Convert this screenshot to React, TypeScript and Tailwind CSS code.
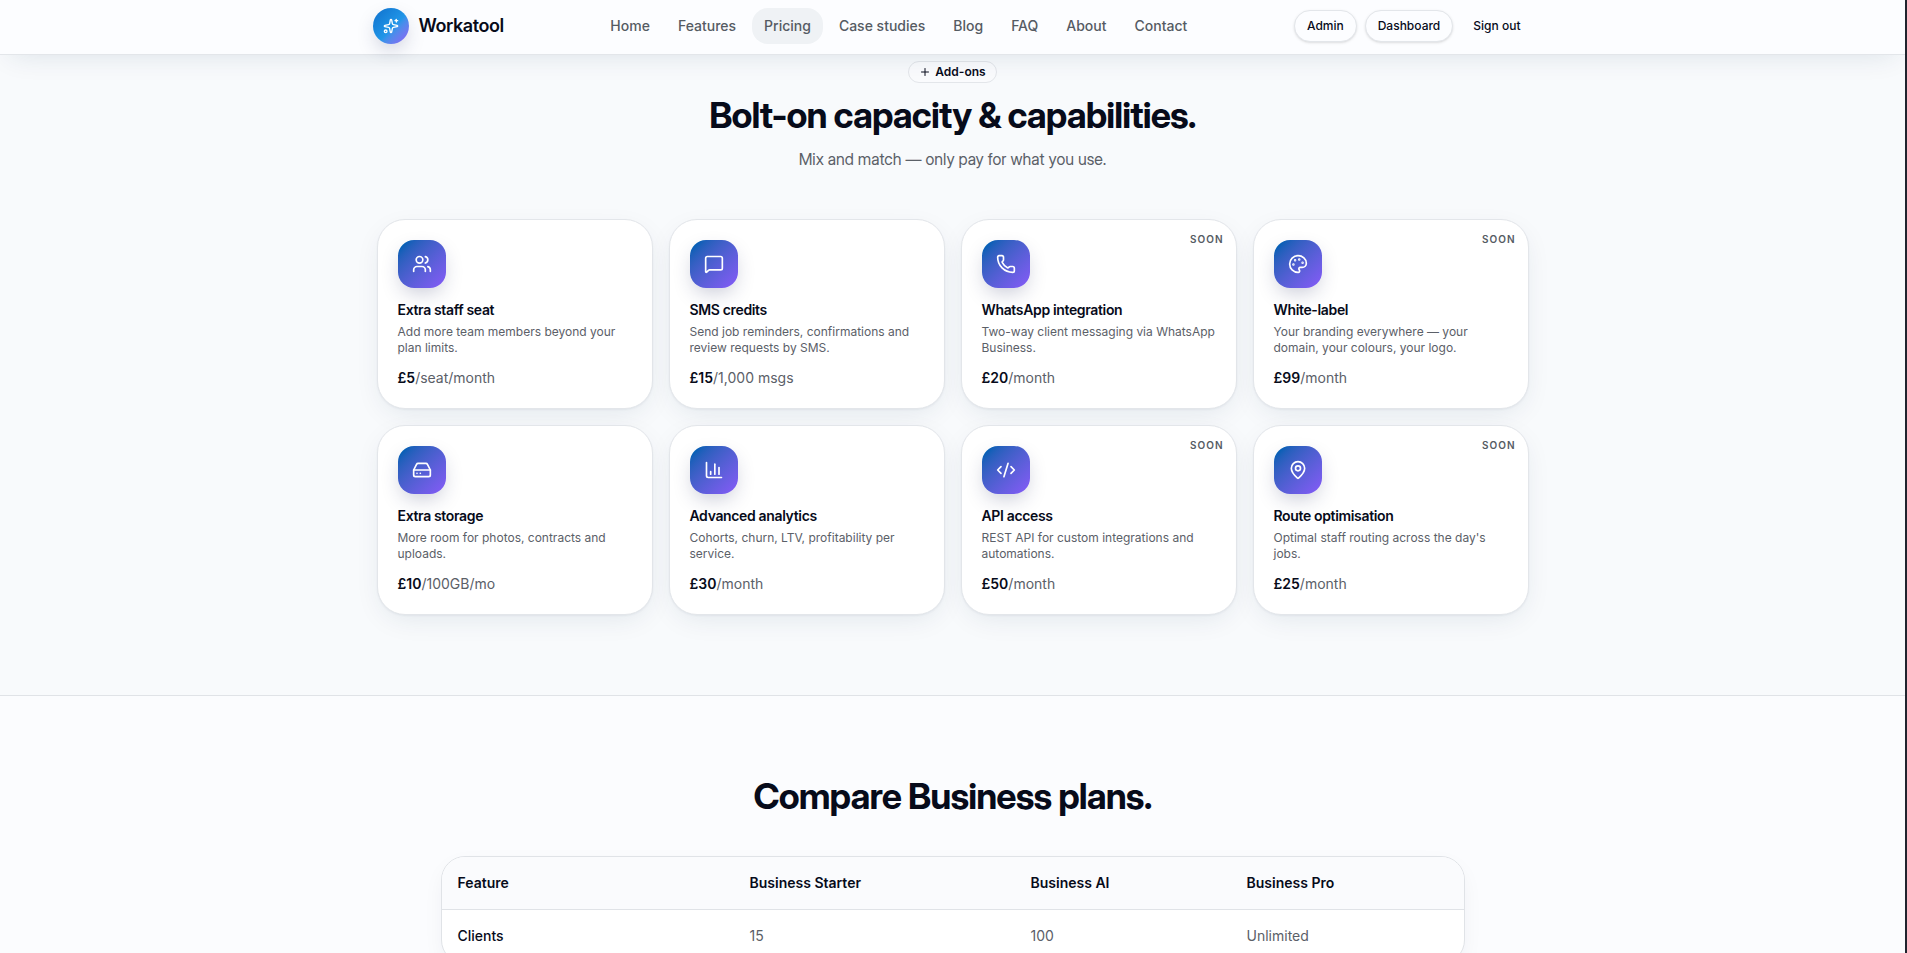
import {
  ChartColumn,
  CodeXml,
  HardDrive,
  MapPin,
  MessageSquare,
  Palette,
  Phone,
  Plus,
  Sparkles,
  Users,
  type LucideIcon,
} from "lucide-react";

type AddOn = {
  icon: LucideIcon;
  title: string;
  text: string;
  price: string;
  unit: string;
  soon?: boolean;
};

const links = ["Home", "Features", "Pricing", "Case studies", "Blog", "FAQ", "About", "Contact"];

const addOns: AddOn[] = [
  { icon: Users, title: "Extra staff seat", text: "Add more team members beyond your plan limits.", price: "£5", unit: "/seat/month" },
  { icon: MessageSquare, title: "SMS credits", text: "Send job reminders, confirmations and review requests by SMS.", price: "£15", unit: "/1,000 msgs" },
  { icon: Phone, title: "WhatsApp integration", text: "Two-way client messaging via WhatsApp Business.", price: "£20", unit: "/month", soon: true },
  { icon: Palette, title: "White-label", text: "Your branding everywhere — your domain, your colours, your logo.", price: "£99", unit: "/month", soon: true },
  { icon: HardDrive, title: "Extra storage", text: "More room for photos, contracts and uploads.", price: "£10", unit: "/100GB/mo" },
  { icon: ChartColumn, title: "Advanced analytics", text: "Cohorts, churn, LTV, profitability per service.", price: "£30", unit: "/month" },
  { icon: CodeXml, title: "API access", text: "REST API for custom integrations and automations.", price: "£50", unit: "/month", soon: true },
  { icon: MapPin, title: "Route optimisation", text: "Optimal staff routing across the day's jobs.", price: "£25", unit: "/month", soon: true },
];

function Header() {
  return (
    <header className="relative z-10 border-b border-[#e3e6ea] bg-[#fcfdff] shadow-[0_10px_28px_-10px_rgba(15,50,80,0.12)]">
      <div className="mx-auto flex max-w-[1200px] items-center justify-between px-5 pt-2 pb-2.5">
        <a href="#" className="flex items-center gap-2.5">
          <span className="flex size-9 items-center justify-center rounded-full bg-linear-135 from-[#1070cc] via-[#2196e8] via-55% to-[#8a5cf6] text-white shadow-[0_8px_20px_-4px_rgba(30,41,90,0.25)]">
            <Sparkles className="size-4" />
          </span>
          <span className="text-lg font-semibold tracking-tight">Workatool</span>
        </a>
        <nav className="flex items-center gap-1">
          {links.map((label) => (
            <a
              key={label}
              href="#"
              className={
                label === "Pricing"
                  ? "rounded-2xl bg-[#eff2f5] px-3 py-2 text-sm font-medium text-[#555b63]"
                  : "rounded-2xl px-3 py-2 text-sm font-medium text-[#555b63]"
              }
            >
              {label}
            </a>
          ))}
        </nav>
        <div className="flex items-center gap-2 text-xs font-medium">
          <button className="h-8 rounded-full border border-[#e3e6ea] bg-[#fcfdff] px-3 shadow-sm">Admin</button>
          <button className="h-8 rounded-full border border-[#e3e6ea] bg-[#fcfdff] px-3 shadow-sm">Dashboard</button>
          <button className="h-8 rounded-full px-3">Sign out</button>
        </div>
      </div>
    </header>
  );
}

function Card({ icon: Icon, title, text, price, unit, soon }: AddOn) {
  return (
    <article className="relative rounded-[28px] border border-[#e3e6ea] bg-white p-5 shadow-[0_1px_2px_rgba(15,40,70,0.05),0_8px_28px_-6px_rgba(15,50,80,0.10)]">
      {soon && (
        <span className="absolute top-3 right-3 text-[10px] leading-[14px] font-semibold tracking-widest text-[#555b63] uppercase">
          Soon
        </span>
      )}
      <div className="flex size-12 items-center justify-center rounded-2xl bg-linear-135 from-[#005fb5] from-10% to-[#855af8] text-white shadow-[0_8px_20px_-4px_rgba(30,41,90,0.25)]">
        <Icon className="size-5" strokeWidth={2} />
      </div>
      <h3 className="mt-3 text-sm font-semibold tracking-tight">{title}</h3>
      <p className="mt-1 text-xs text-[#5b6068]">{text}</p>
      <p className="mt-3 text-sm text-[#5b6068]">
        <span className="font-semibold text-[#070b1a]">{price}</span>
        {unit}
      </p>
    </article>
  );
}

export default function App() {
  return (
    <div className="h-screen overflow-hidden border-r-2 border-[#20242e] bg-[#fbfcfe] font-['Inter',sans-serif] text-[#070b1a]">
      <Header />
      <main>
        <section className="border-b border-[#e0e3e7] bg-[#f8fafc] px-5 pt-1.5 pb-20">
          <div className="mx-auto max-w-6xl">
            <div className="flex flex-col items-center text-center">
              <span className="flex items-center gap-1 rounded-full border border-[#e3e6ea] bg-[#fafbfd] px-2.5 py-0.5 text-xs font-semibold">
                <Plus className="size-3" />
                Add-ons
              </span>
              <h2 className="mt-3 font-['Inter_Display','Inter',sans-serif] text-4xl font-bold tracking-tight">
                Bolt-on capacity &amp; capabilities.
              </h2>
              <p className="mt-3 font-['Inter_Display','Inter',sans-serif] text-base text-[#5b6068]">
                Mix and match — only pay for what you use.
              </p>
            </div>
            <div className="mt-12 grid grid-cols-4 gap-4">
              {addOns.map((item) => (
                <Card key={item.title} {...item} />
              ))}
            </div>
          </div>
        </section>
        <section className="px-5 py-20">
          <h2 className="text-center font-['Inter_Display','Inter',sans-serif] text-4xl font-bold tracking-tight">
            Compare Business plans.
          </h2>
          <div className="mx-auto mt-10 max-w-5xl overflow-hidden rounded-3xl border border-[#e0e3e7] bg-white shadow-[0_8px_24px_-6px_rgba(15,40,70,0.08)]">
            <table className="w-full table-fixed text-left text-sm">
              <thead className="bg-[#fafbfd]">
                <tr className="border-b border-[#e0e3e7]">
                  <th className="w-[292px] p-4 font-semibold">Feature</th>
                  <th className="w-[281px] p-4 font-semibold">Business Starter</th>
                  <th className="w-[216px] p-4 font-semibold">Business AI</th>
                  <th className="p-4 font-semibold">Business Pro</th>
                </tr>
              </thead>
              <tbody>
                <tr className="border-b border-[#e0e3e7] text-[#5b6068]">
                  <th scope="row" className="p-4 font-medium text-[#070b1a]">Clients</th>
                  <td className="p-4">15</td>
                  <td className="p-4">100</td>
                  <td className="p-4">Unlimited</td>
                </tr>
              </tbody>
            </table>
          </div>
        </section>
      </main>
    </div>
  );
}
